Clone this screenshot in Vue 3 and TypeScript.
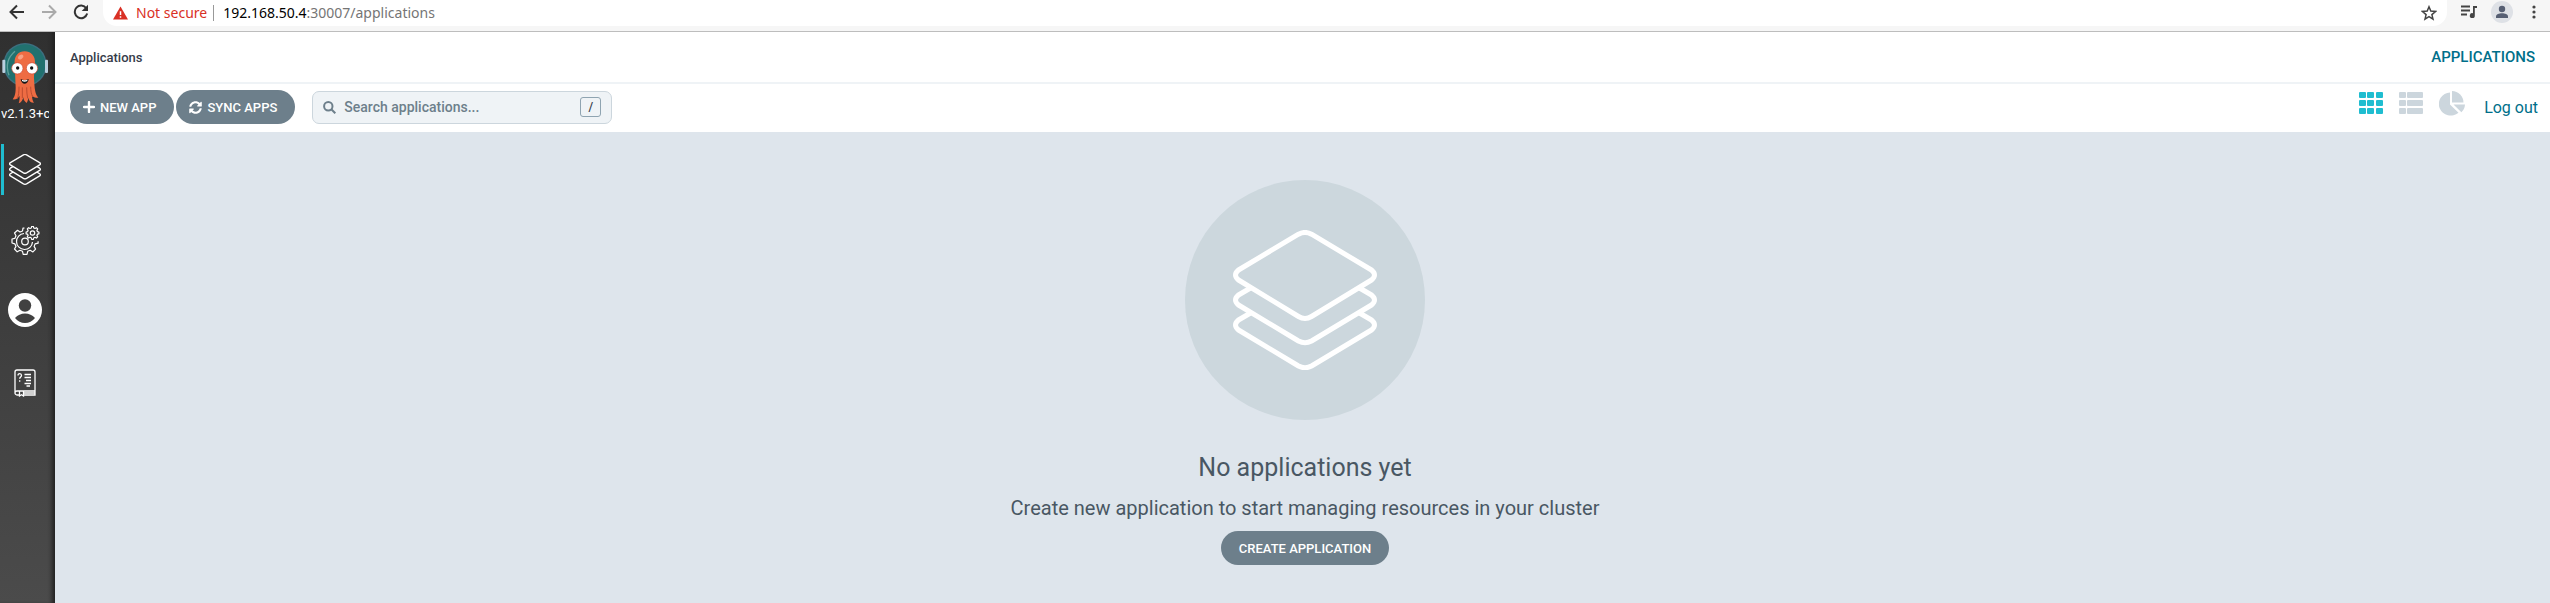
<script setup lang="ts">
import { ref } from 'vue'

type View = 'tiles' | 'list' | 'summary'

const search = ref('')
const view = ref<View>('tiles')
const columns = [0, 8, 17]
const rows = [0, 8, 16]
</script>

<template>
  <div class="window">
    <header class="browser">
      <nav class="browser-nav">
        <button class="plain" aria-label="Back">
          <svg width="16" height="16" viewBox="0 0 16 16" class="stroke dark"><path d="M15 8H2M8 1.500 1.500 8 8 14.500" /></svg>
        </button>
        <button class="plain" aria-label="Forward">
          <svg width="16" height="16" viewBox="0 0 16 16" class="stroke pale"><path d="M1 8H14M8 1.500 14.500 8 8 14.500" /></svg>
        </button>
        <button class="plain" aria-label="Reload">
          <svg width="16" height="16" viewBox="0 0 16 16" class="stroke dark"><path d="M13.300 4.300A6.300 6.300 0 1 0 14.200 9.600" /><path d="M15 .7V7H8.700L15 .7Z" fill="#333" stroke="none" /></svg>
        </button>
      </nav>
      <div class="address">
        <svg width="15" height="14" viewBox="0 0 16 14"><path d="M8 0 16 14H0Z" fill="#d93025" /><path d="M7.200 5h1.600v4.200H7.200zM7.200 10.400h1.600V12H7.200z" fill="#fff" /></svg>
        <span class="insecure">Not secure</span>
        <span class="url"><b>192.168.50.4</b>:30007/applications</span>
        <button class="plain star" aria-label="Bookmark">
          <svg width="16" height="16" viewBox="0 0 16 16"><path d="m8 1.800 1.800 4.300 4.700.4-3.600 3.100 1.100 4.600L8 11.700l-4 2.500 1.100-4.600L1.500 6.500l4.700-.4Z" fill="none" stroke="#444" stroke-width="1.500" /></svg>
        </button>
      </div>
      <div class="browser-tools">
        <button class="plain" aria-label="Media">
          <svg width="16" height="14" viewBox="0 0 16 14"><path d="M0 1.500h9M0 5.500h9M0 9.500h6" stroke="#444" stroke-width="1.800" /><path d="M12 1h4v2h-2.200v7.500A2.500 2.500 0 1 1 12 8.200Z" fill="#444" /></svg>
        </button>
        <button class="plain profile" aria-label="Profile">
          <svg width="22" height="22" viewBox="0 0 22 22"><circle cx="11" cy="11" r="11" fill="#dee1e6" /><circle cx="11" cy="8" r="3.200" fill="#565f73" /><path d="M5 17v-1.500c0-2.200 3-3.300 6-3.300s6 1.100 6 3.300V17Z" fill="#565f73" /></svg>
        </button>
        <button class="plain" aria-label="Menu">
          <svg width="4" height="14" viewBox="0 0 4 14" fill="#444"><circle cx="2" cy="2" r="1.600" /><circle cx="2" cy="7" r="1.600" /><circle cx="2" cy="12" r="1.600" /></svg>
        </button>
      </div>
    </header>

    <div class="app">
      <aside class="sidebar">
        <svg class="logo" width="46" height="62" viewBox="9 48 138 186">
          <circle cx="78" cy="116" r="65" fill="#3d6f80" />
          <circle cx="78" cy="116" r="61" fill="#21716f" />
          <path d="M30 148Q14 105 48 76" fill="none" stroke="#5fa09c" stroke-width="4" />
          <rect x="10" y="101" width="9" height="40" rx="3" fill="#b9cfdf" />
          <rect x="138" y="101" width="9" height="40" rx="3" fill="#b9cfdf" />
          <path d="M47 112C45 90 59 76 77 76s33 14 31 36c-1 16-5 36-2 60 1 20 4 35 12 43-10 2-16-1-19-7 0 10 2 17 6 22-10 0-16-6-17-15-1 6-2 11-5 16-6-4-10-9-10-17-2 8-6 16-14 18 2-7 4-14 2-23-3 7-9 12-20 11 8-9 9-23 9-36-1-24-2-48-3-70Z" fill="#ee6c43" />
          <path d="M60 182c0 15-1 26-5 36M70 184v32M83 184c0 12 1 23 3 33M95 182c0 12 2 22 6 31" fill="none" stroke="#bd4c30" stroke-width="3" />
          <ellipse cx="65" cy="93" rx="9" ry="6" fill="#f6a184" transform="rotate(-35 65 93)" />
          <circle cx="55" cy="127" r="17" fill="#fff" stroke="#ce4934" stroke-width="2" />
          <circle cx="99" cy="127" r="17" fill="#fff" stroke="#ce4934" stroke-width="2" />
          <circle cx="56" cy="126" r="5" fill="#111" />
          <circle cx="98" cy="126" r="5" fill="#111" />
          <path d="M65 159q12 7 24 0c-2 19-22 19-24 0Z" fill="#171717" />
          <path d="M69 161q8 4 16 0v4q-8 4-16 0Z" fill="#fff" />
        </svg>
        <span class="version">v2.1.3+c</span>
        <nav class="menu">
          <a href="#applications" class="active" aria-label="Applications">
            <svg width="32" height="31" viewBox="0 0 144 140" fill="none" stroke="#fff" stroke-width="6" stroke-linejoin="round">
              <path d="M65 4q7-4 14 0l59 35q7 5 0 10L79 85q-7 4-14 0L6 49q-7-5 0-10Z" />
              <path d="M17 57 6 64q-7 5 0 10l59 36q7 4 14 0l59-36q7-5 0-10l-11-7M17 82 6 89q-7 5 0 10l59 36q7 4 14 0l59-36q7-5 0-10l-11-7" />
            </svg>
          </a>
          <a href="#settings" aria-label="Settings">
            <svg width="30" height="30" viewBox="0 0 30 30" fill="none" stroke="#fff" stroke-width="1.200" stroke-linejoin="round">
              <path d="M14.500 2 13 2.200 12.500 5 10 6 7.500 4.300 4.500 7 6 9.800 4.800 12.400 2 13v4l2.800.8L6 20.400 4.500 23 7.200 25.800 10 24.300l2.500 1 .7 3h3.800l.7-3 2.500-1 2.700 1.600 2.700-2.800-1.500-2.700 1-2.500 3-.7v-2" />
              <path d="M14 7.500a8 8 0 1 0 8.500 8.500" />
              <circle cx="15" cy="15.500" r="3.300" />
              <path d="m21.300 2 .3-1.500h1.800l.4 1.500 1.200.5 1.400-.8 1.300 1.300-.8 1.400.5 1.200 1.500.4v1.800l-1.500.4-.5 1.200.8 1.400-1.300 1.300-1.400-.8-1.200.5-.4 1.500h-1.800l-.4-1.500-1.200-.5-1.400.8-1.300-1.300.8-1.400-.5-1.200-1.500-.4V6l1.500-.4.5-1.200-.8-1.400L18.600 1.700l1.400.8Z" />
              <circle cx="22.500" cy="7" r="2.200" />
            </svg>
          </a>
          <a href="#user-info" class="user" aria-label="User info">
            <svg width="34" height="34" viewBox="0 0 34 34"><circle cx="17" cy="17" r="17" fill="#fff" /><circle cx="17" cy="12.500" r="6.200" fill="#414141" /><path d="M7 25q4-4.500 10-4.500T27 25Q23 30 17 30T7 25Z" fill="#414141" /></svg>
          </a>
          <a href="#help" aria-label="Documentation">
            <svg width="22" height="28" viewBox="0 0 22 28" fill="none" stroke="#fff" stroke-width="1.300">
              <path d="M5 26H3a2 2 0 0 1-2-2V3a2 2 0 0 1 2-2h16a2 2 0 0 1 2 2v19H3a2 2 0 0 0-2 2M10 26h11v-4M10 24h11" />
              <path d="M5.500 22v5l2-1.200 2 1.200v-5M4 6.500C4 4 7.500 4 7.500 6.500 7.500 8 5.700 8 5.700 9.700M5.700 11.200v1.500M10.500 5.500H17M10.500 8.500H17M12 11.500h5M10.500 14.500H17M12.500 17H16" />
            </svg>
          </a>
        </nav>
      </aside>

      <div class="page">
        <header class="topbar">
          <h1>Applications</h1>
          <span class="section">APPLICATIONS</span>
        </header>
        <div class="toolbar">
          <button class="pill">
            <svg width="12" height="12" viewBox="0 0 12 12"><path d="M6 1v10M1 6h10" stroke="#fff" stroke-width="2.400" stroke-linecap="round" /></svg>
            NEW APP
          </button>
          <button class="pill">
            <svg width="13" height="13" viewBox="0 0 512 512" fill="#fff"><path d="M370.700 133.300C339.500 104 298.900 88 255.800 88c-77.500.1-144.300 53.200-162.800 126.900-1.300 5.400-6.100 9.200-11.700 9.200H24.100c-7.500 0-13.200-6.800-11.800-14.200C33.900 94.900 134.800 8 256 8c66.400 0 126.800 26.100 171.300 68.700L463 41c15.100-15.100 41-4.400 41 17v134c0 13.300-10.700 24-24 24H346c-21.400 0-32.100-25.900-17-41zM32 296h134c21.400 0 32.100 25.900 17 41l-41.800 41.800c31.300 29.300 71.800 45.300 114.900 45.200 77.400-.1 144.300-53.100 162.800-126.800 1.300-5.400 6.100-9.200 11.700-9.200h57.300c7.500 0 13.200 6.800 11.800 14.200C478.100 417.100 377.200 504 256 504c-66.400 0-126.800-26.100-171.300-68.700L49 471c-15.100 15.100-41 4.400-41-17V320c0-13.300 10.700-24 24-24z" /></svg>
            SYNC APPS
          </button>
          <label class="search">
            <svg width="13" height="13" viewBox="0 0 13 13" fill="none" stroke="#6d7f8b" stroke-width="2"><circle cx="5.300" cy="5.300" r="4.200" /><path d="m8.300 8.300 4 4" /></svg>
            <input v-model="search" type="text" placeholder="Search applications..." aria-label="Search applications" />
            <kbd>/</kbd>
          </label>
          <div class="views">
            <button class="plain" :class="{ on: view === 'tiles' }" aria-label="Tiles" @click="view = 'tiles'">
              <svg width="24" height="22" viewBox="0 0 24 22" fill="currentColor"><g v-for="y in rows" :key="y"><rect v-for="x in columns" :key="x" :x="x" :y="y" width="7" height="6" rx="1" /></g></svg>
            </button>
            <button class="plain" :class="{ on: view === 'list' }" aria-label="List" @click="view = 'list'">
              <svg width="24" height="22" viewBox="0 0 24 22" fill="currentColor"><g v-for="y in rows" :key="y"><rect x="0" :y="y" width="7" height="6" rx="1" /><rect x="8" :y="y" width="16" height="6" rx="1" /></g></svg>
            </button>
            <button class="plain" :class="{ on: view === 'summary' }" aria-label="Summary" @click="view = 'summary'">
              <svg width="26" height="25" viewBox="0 0 26 25" fill="currentColor"><path d="M11 1.500v12l8.500 8.300A12 11.500 0 1 1 11 1.500Z" /><path d="M13 0a12 11.500 0 0 1 11.500 11.500H13Z" /><path d="M14.500 13.500H26a11.500 11.500 0 0 1-3.600 7.700Z" /></svg>
            </button>
          </div>
          <a href="#logout" class="logout">Log out</a>
        </div>
        <main class="empty">
          <div class="disc">
            <svg width="144" height="140" viewBox="0 0 144 140" fill="none" stroke="#fff" stroke-width="5" stroke-linejoin="round">
              <path d="M65.500 4.200q6.500-3.500 13 0L138.500 40q6 5 0 10L78.500 86.500q-6.500 4-13 0L5.500 50q-6-5 0-10Z" />
              <path d="M17.500 58 5.500 65q-6 5 0 10l60 36q6.500 3.500 13 0l60-36q6-5 0-10l-12-7" />
              <path d="M17.500 83 5.500 90q-6 5 0 10l60 36q6.500 3.500 13 0l60-36q6-5 0-10l-12-7" />
            </svg>
          </div>
          <h2>No applications yet</h2>
          <p>Create new application to start managing resources in your cluster</p>
          <button class="pill">CREATE APPLICATION</button>
        </main>
      </div>
    </div>
  </div>
</template>

<style>
body {
  margin: 0;
}
</style>

<style scoped>
.window {
  display: flex;
  flex-direction: column;
  min-height: 100vh;
  font-family: Roboto, "Liberation Sans", sans-serif;
  color: #495763;
}
button {
  font: inherit;
  cursor: pointer;
}
svg {
  display: block;
  flex: none;
}
.plain {
  display: block;
  padding: 0;
  border: 0;
  background: none;
}
.browser {
  display: flex;
  height: 31px;
  border-bottom: 1px solid #bdbdbd;
  background: #f6f6f6;
  font: 14px "Noto Sans", sans-serif;
}
.browser-nav {
  display: flex;
  gap: 16px;
  width: 94px;
  height: 24px;
  padding-left: 9px;
  align-items: center;
}
.stroke {
  fill: none;
  stroke-width: 2;
}
.dark {
  stroke: #333;
}
.pale {
  stroke: #aaa;
}
.address {
  display: flex;
  flex: 1;
  align-items: center;
  height: 26px;
  padding: 0 10px;
  border-radius: 0 0 14px 14px;
  background: #fff;
  line-height: 24px;
}
.insecure {
  margin: 0 6px 0 8px;
  color: #d93025;
}
.url {
  padding-left: 9px;
  border-left: 1px solid #999;
  line-height: 16px;
  color: #757575;
}
.url b {
  font-weight: 400;
  color: #000;
}
.star {
  margin-left: auto;
}
.browser-tools {
  display: flex;
  align-items: center;
  gap: 14px;
  height: 24px;
  padding: 0 14px;
}
.browser-tools .plain:last-child {
  margin-left: 5px;
}
.app {
  display: flex;
  flex: 1;
}
.sidebar {
  box-sizing: border-box;
  display: flex;
  flex-direction: column;
  align-items: center;
  width: 55px;
  padding: 10px 5px 0 0;
  background: linear-gradient(#303030, #4b4b4b);
  box-shadow: inset -5px 0 4px -2px #222;
}
.version {
  width: 48px;
  overflow: hidden;
  line-height: 20px;
  font-size: 13px;
  color: #fff;
  white-space: nowrap;
}
.menu {
  display: flex;
  flex-direction: column;
  gap: 20px;
  width: 48px;
  margin-top: 20px;
}
.menu a {
  box-sizing: border-box;
  display: flex;
  align-items: center;
  justify-content: center;
  height: 51px;
  padding-right: 3px;
  border-left: 3px solid transparent;
}
.menu a.active {
  border-color: #1fbdd0;
}
.menu a.user {
  padding-bottom: 4px;
}
.page {
  display: flex;
  flex: 1;
  flex-direction: column;
}
.topbar {
  display: flex;
  align-items: center;
  justify-content: space-between;
  height: 50px;
  padding: 0 15px;
  border-bottom: 2px solid #eff3f6;
  background: #fff;
}
h1 {
  margin: 0;
  font-size: 13px;
  font-weight: 500;
  color: #363c4a;
}
.section {
  font-size: 15px;
  font-weight: 500;
  color: #006f8a;
}
.toolbar {
  display: flex;
  align-items: center;
  height: 46px;
  padding: 0 12px 2px 15px;
  background: #fff;
}
.pill {
  display: flex;
  align-items: center;
  gap: 5px;
  height: 34px;
  margin-right: 2px;
  padding: 0 18px 0 13px;
  border: 0;
  border-radius: 17px;
  background: #6d7f8b;
  font-size: 13px;
  font-weight: 500;
  color: #fff;
}
.search {
  box-sizing: border-box;
  display: flex;
  align-items: center;
  width: 300px;
  height: 33px;
  margin-left: 15px;
  padding: 0 10px;
  border: 1px solid #ccd6dd;
  border-radius: 7px;
  background: #eff3f6;
}
.search input {
  flex: 1;
  min-width: 0;
  padding: 0 8px;
  border: 0;
  outline: 0;
  background: none;
  font: 500 14px Roboto, sans-serif;
  color: #495763;
}
.search input::placeholder {
  color: #6d7f8b;
  opacity: 1;
}
kbd {
  width: 19px;
  border: 1px solid #8fa4b1;
  border-radius: 3px;
  font: 500 12px/18px Roboto, sans-serif;
  text-align: center;
  color: #363c4a;
}
.views {
  display: flex;
  align-items: center;
  gap: 16px;
  margin: 0 19px 8px auto;
}
.views .plain {
  color: #ccd6dd;
}
.views .on {
  color: #1fbdd0;
}
.logout {
  font-size: 16px;
  color: #006f8a;
  text-decoration: none;
}
.empty {
  display: flex;
  flex: 1;
  flex-direction: column;
  align-items: center;
  padding: 48px 0 0 5px;
  background: #dee5ec;
  text-align: center;
}
.disc {
  display: flex;
  align-items: center;
  justify-content: center;
  width: 240px;
  height: 240px;
  border-radius: 50%;
  background: #ccd7dd;
}
h2 {
  margin: 30px 0 0;
  font-size: 25px;
  font-weight: 400;
  line-height: 36px;
}
p {
  margin: 7px 0 8px;
  font-size: 20px;
  line-height: 30px;
}
.empty .pill {
  margin: 0;
  padding: 0 18px;
}
</style>
